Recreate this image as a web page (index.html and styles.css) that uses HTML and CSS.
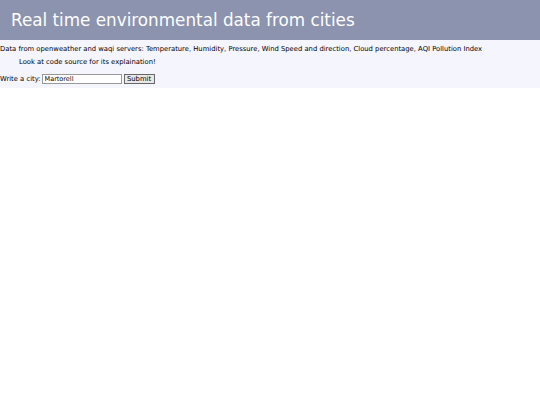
FILE: index.html
```html
<!DOCTYPE html>
<html lang="en">
<head>
    <meta charset="UTF-8">
    <title>Real time environmental data from cities</title>
    <link rel="stylesheet" href="styles.css">
</head>
<body>
    <div class="header">
        <h1>Real time environmental data from cities</h1>
    </div>
    <div class="intro">
        <p class="sources">Data from openweather and waqi servers: Temperature, Humidity, Pressure, Wind Speed and direction, Cloud percentage, AQI Pollution Index</p>
        <p class="note">Look at code source for its explaination!</p>
        <form class="city-form" onsubmit="return false;">
            <label for="city">Write a city:</label><input type="text" id="city" class="city-input" value="Martorell"><button class="submit-button">Submit</button>
        </form>
    </div>
</body>
</html>
```

FILE: styles.css
```css
body {
    margin: 0;
    padding: 0;
    font-family: "DejaVu Sans", Verdana, sans-serif;
    background-color: white;
}

.header {
    background-color: #8b93ae;
    height: 40px;
    display: flex;
    align-items: center;
}

.header h1 {
    margin: 0 0 0 11px;
    font-size: 16.8px;
    font-weight: normal;
    color: white;
}

.intro {
    background-color: #f5f5fd;
    padding: 3px 0 2px 0;
    font-size: 6.8px;
    color: black;
}

.intro p {
    margin: 0;
}

.sources {
    line-height: 12px;
}

.note {
    padding-left: 19px;
    line-height: 14px;
    margin-bottom: 3px !important;
}

.city-form {
    display: flex;
    align-items: center;
    height: 14px;
}

.city-input {
    font-family: inherit;
    font-size: 6.5px;
    width: 74px;
    height: 8px;
    padding: 0 2px;
    margin: 0 0 0 1px;
    border: 1px solid #999;
    box-sizing: content-box;
}

.submit-button {
    font-family: inherit;
    font-size: 6.8px;
    margin-left: 2px;
    padding: 0 2px;
    width: 31px;
    height: 10px;
    line-height: 8px;
    border: 1px solid #666;
    background-color: #e8e8e8;
}
```
